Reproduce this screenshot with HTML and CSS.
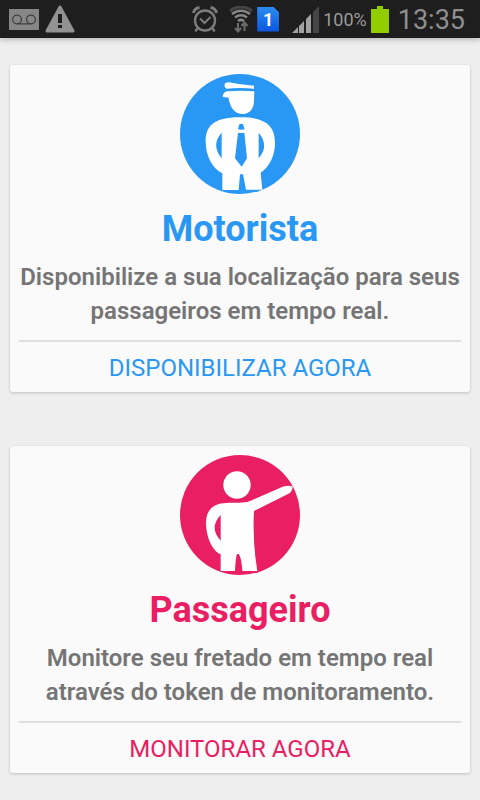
FILE: index.html
```html
<!DOCTYPE html>
<html lang="pt-BR">
<head>
    <meta charset="UTF-8">
    <meta name="viewport" content="width=device-width, initial-scale=1.0">
    <title>Motorista ou Passageiro</title>
    <link rel="stylesheet" href="styles.css">
</head>
<body>
    <header class="status-bar">
        <div class="status-left">
            <svg width="30" height="21" viewBox="0 0 30 21" aria-hidden="true">
                <rect width="30" height="21" fill="#868686"/>
                <g fill="none" stroke="#3c3c3c" stroke-width="1.2">
                    <circle cx="8" cy="10.5" r="4.4"/>
                    <circle cx="22" cy="10.5" r="4.4"/>
                    <path d="M8 14.9h14"/>
                </g>
            </svg>
            <svg width="30" height="28" viewBox="0 0 30 28" aria-hidden="true">
                <path d="M15 2 28 26H2z" fill="#929292" stroke="#929292" stroke-width="3" stroke-linejoin="round"/>
                <path d="M13 9h4v9h-4zM13 20h4v3h-4z" fill="#1e1e1e"/>
            </svg>
        </div>
        <div class="status-right">
            <svg class="alarm" width="26" height="27" viewBox="0 0 26 27" fill="none" stroke="#7c7c7c" aria-hidden="true">
                <circle cx="13" cy="14.5" r="10" stroke-width="2.4"/>
                <path d="m8 12.500 4.500 4.500 6-6" stroke-width="2"/>
                <path d="M1.500 7C2 4 4 2 7.500 1.500M18.500 1.500C22 2 24 4 24.500 7" stroke-width="3"/>
                <path d="m5.500 22-2 3.500M20.500 22l2 3.500" stroke-width="2.500"/>
            </svg>
            <svg class="wifi" width="24" height="27" viewBox="0 0 24 27" fill="none" aria-hidden="true">
                <path d="M1 5a17 17 0 0 1 22 0" stroke="#454545" stroke-width="3"/>
                <g stroke="#858585" stroke-width="2.500">
                    <path d="M3 8a14 14 0 0 1 18 0"/>
                    <path d="M6 11.500a9.500 9.500 0 0 1 12 0"/>
                    <path d="M9 15a5 5 0 0 1 6 0"/>
                </g>
                <path d="M9 17v8M6 22l3 3.500 3-3.500M15.500 25v-8M12.500 20l3-3.500 3 3.500" stroke="#6c6c6c" stroke-width="2"/>
            </svg>
            <span class="sim">1</span>
            <svg class="signal" width="28" height="27" viewBox="0 0 28 27" aria-hidden="true">
                <path d="M0 27l6-6v6zM7 20l5-5v12H7zM14 13l5-5v19h-5z" fill="#a2a2a2"/>
                <path d="M21 6l6-6v27h-6z" fill="#464646"/>
            </svg>
            <span class="battery-level">100%</span>
            <svg class="battery" width="18" height="27" viewBox="0 0 18 27" aria-hidden="true">
                <path d="M0 3h6V0h6v3h6v24H0z" fill="#91cd00"/>
            </svg>
            <time class="clock">13:35</time>
        </div>
    </header>

    <main class="cards">
        <section class="card driver">
            <svg class="card-icon" viewBox="0 0 360 360" aria-hidden="true">
                <circle cx="180" cy="180" r="180" fill="currentColor"/>
                <g fill="#fff">
                    <path d="M134 31q1-6 12-6 38 8 76 10v9q-42-4-82 0-8-3-6-13z"/>
                    <path d="M128 68q1-14 14-16 40-4 81 0l-1 31q-3 37-37 37-32-2-40-50-9 1-17-2z"/>
                    <path d="M77 203c0-46 22-73 103-73s105 27 105 78c0 36-17 72-43 88l5 51h-49l-9-46h-9l-4 47h-49v-50c-32-16-50-56-50-95z"/>
                </g>
                <g fill="currentColor">
                    <path d="M125 176v77q-33-40 0-77zM236 176v77q33-38 0-77z"/>
                    <path d="M178 151q6-3 11 0l5 15q-10 2-20 0z"/>
                    <path d="M174 176q10 2 19 0l8 77-16 25-20-25z"/>
                </g>
            </svg>
            <h2 class="card-title">Motorista</h2>
            <p class="card-text">Disponibilize a sua localização para seus passageiros em tempo real.</p>
            <button type="button" class="card-action">DISPONIBILIZAR AGORA</button>
        </section>

        <section class="card passenger">
            <svg class="card-icon" viewBox="0 0 360 360" aria-hidden="true">
                <circle cx="180" cy="180" r="180" fill="currentColor"/>
                <g fill="#fff">
                    <circle cx="171" cy="90" r="41"/>
                    <path d="M78 203c0-34 18-58 60-59 28-1 54 1 70-5l100-44q20-5 29-1 3 9-7 20L222 168q-5 90 10 180h-45q-3-43-11-51h-5q-4 10-6 51h-43v-50c-29-13-44-59-44-95z"/>
                </g>
                <path d="M122 180v77q-36-39 0-77z" fill="currentColor"/>
            </svg>
            <h2 class="card-title">Passageiro</h2>
            <p class="card-text">Monitore seu fretado em tempo real através do token de monitoramento.</p>
            <button type="button" class="card-action">MONITORAR AGORA</button>
        </section>
    </main>
</body>
</html>
```
FILE: styles.css
```css
:root {
    --driver-color: #2998f5;
    --passenger-color: #e91e63;
    --text-color: #757575;
    --card-color: #fafafa;
    --border-color: #dfdfdf;
}

* {
    box-sizing: border-box;
}

body {
    margin: 0;
    min-height: 100vh;
    background-color: #eeeeee;
    font-family: Roboto, 'Liberation Sans', sans-serif;
    color: var(--text-color);
}

.status-bar {
    display: flex;
    justify-content: space-between;
    align-items: center;
    height: 38px;
    padding: 0 15px 0 9px;
    background-color: #1e1e1e;
    box-shadow: 0 1px 6px rgba(0, 0, 0, 0.3);
}

.status-left,
.status-right {
    display: flex;
    align-items: center;
}

.status-left {
    gap: 6px;
}

.alarm {
    margin-right: 11px;
}

.wifi {
    margin-right: 4px;
}

.sim {
    width: 22px;
    height: 25px;
    margin-right: 13px;
    background: linear-gradient(#2a8cf0, #0b55e0);
    clip-path: polygon(0 0, 72% 0, 100% 24%, 100% 100%, 0 100%);
    color: white;
    font-size: 18px;
    font-weight: 700;
    line-height: 26px;
    text-align: center;
}

.signal {
    margin-right: 3px;
}

.battery-level {
    margin-right: 4px;
    font-size: 18px;
    color: #9a9a9a;
}

.battery {
    margin-right: 9px;
}

.clock {
    padding-top: 2px;
    font-size: 27px;
    line-height: 36px;
    color: #8f8f8f;
}

.cards {
    display: flex;
    flex-direction: column;
    gap: 54px;
    padding: 27px 10px;
}

.card {
    display: flex;
    flex-direction: column;
    align-items: center;
    padding: 9px 9px 0;
    background-color: var(--card-color);
    border-radius: 3px;
    box-shadow: 0 1px 3px rgba(0, 0, 0, 0.2);
    text-align: center;
}

.driver {
    color: var(--driver-color);
}

.passenger {
    color: var(--passenger-color);
}

.card-icon {
    width: 120px;
    height: 120px;
}

.card-title {
    margin: 14px 0 10px;
    font-size: 36px;
    font-weight: 700;
    line-height: 42px;
}

.card-text {
    margin: 0 0 12px;
    font-size: 24px;
    font-weight: 600;
    line-height: 34px;
    color: var(--text-color);
}

.card-action {
    width: 100%;
    height: 52px;
    padding: 2px 0 0;
    border: none;
    border-top: 2px solid var(--border-color);
    background: none;
    color: inherit;
    font-family: inherit;
    font-size: 24px;
    cursor: pointer;
}
```
